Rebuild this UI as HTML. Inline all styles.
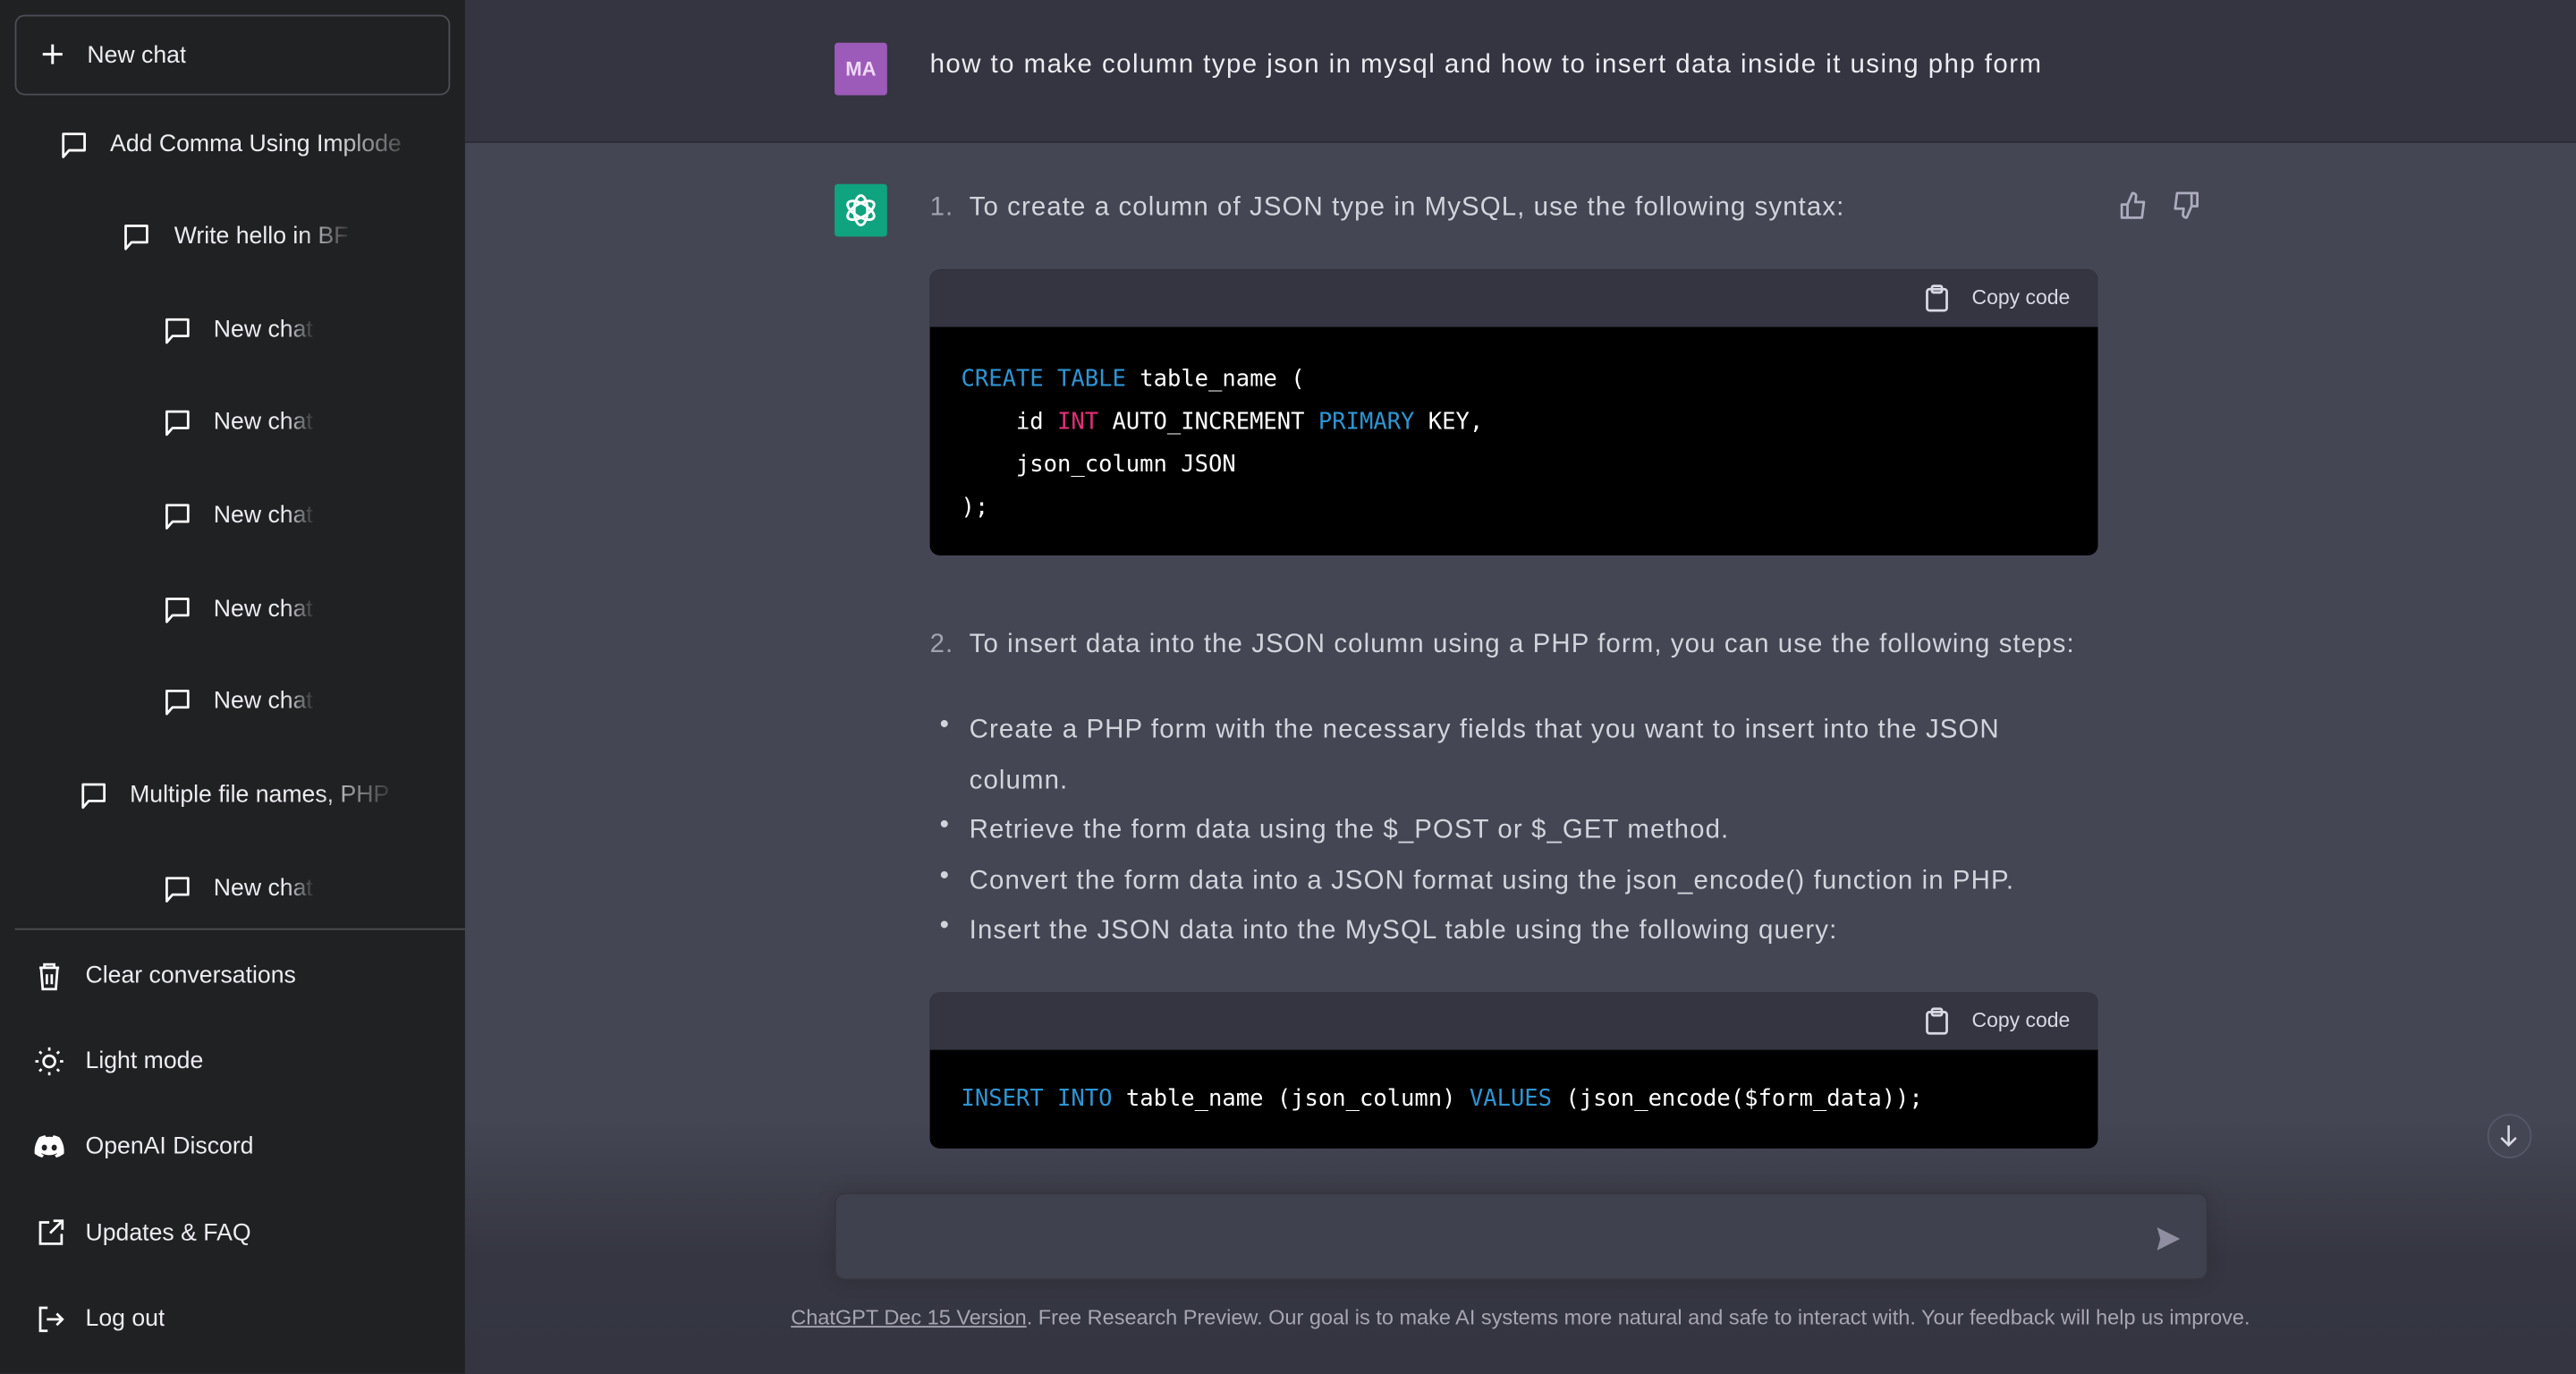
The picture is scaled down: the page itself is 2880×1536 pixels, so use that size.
<!DOCTYPE html>
<html><head><meta charset="utf-8">
<style>
html,body{margin:0;padding:0;width:2880px;height:1536px;overflow:hidden;background:#343541}
#w{position:absolute;left:0;top:0;width:1568px;height:836px;transform:scale(1.83673);transform-origin:0 0;font-family:"Liberation Sans",sans-serif;color:#ececf1;overflow:hidden}
.a{position:absolute;white-space:nowrap}
#side{position:absolute;left:0;top:0;width:283px;height:836px;background:#202123}
.si{position:absolute;font-size:14.5px;color:#ececf1;line-height:20px;overflow:hidden}
.fade{-webkit-mask-image:linear-gradient(to right,#000 70%,transparent);mask-image:linear-gradient(to right,#000 70%,transparent)}
svg{position:absolute;overflow:visible}
.main{position:absolute;left:283px;top:0;width:1285px;height:836px;background:#444654}
.txt{font-size:16px;letter-spacing:0.6px;color:#d1d5db;line-height:20px}
.code{position:absolute;left:566px;width:711px;border-radius:6px;overflow:hidden;background:#000}
.ch{height:35px;background:#343541;position:relative}
.cc{position:absolute;right:17px;top:10px;font-size:12.5px;color:#d9d9e3}
.mono{font-family:"DejaVu Sans Mono","Liberation Mono",monospace;font-size:13.9px;color:#fff}
.kw{color:#2e95d3}.red{color:#df3079}
</style></head><body><div id="w">
<div class="main"></div>
<div class="a" style="left:283px;top:0;width:1285px;height:86px;background:#343541;border-bottom:1px solid #2b2c35"></div>
<div class="a" style="left:283px;top:680px;width:1285px;height:156px;background:linear-gradient(#444654 0%,#353641 55%,#343541 100%)"></div>

<div id="side">
<div class="a" style="left:9px;top:9px;width:263px;height:47px;border:1px solid #4d4d55;border-radius:6px"></div>
<svg style="left:25px;top:26px" width="14" height="14" viewBox="0 0 14 14"><path d="M7 1v12M1 7h12" stroke="#fff" stroke-width="1.6"/></svg>
<div class="si" style="left:53px;top:24px">New chat</div>
</div>

<div id="items"></div>
<div class="a" style="left:9px;top:565px;width:274px;height:1px;background:#4d4d4f"></div>

<svg style="left:22px;top:585px" width="16" height="18" viewBox="0 0 16 18" fill="none" stroke="#fff" stroke-width="1.5"><path d="M2 4h12M5 4V2h6v2M3 4l1 13h8l1-13M6.5 8v6M9.5 8v6"/></svg>
<div class="si" style="left:52px;top:584px">Clear conversations</div>
<svg style="left:21px;top:637px" width="18" height="18" viewBox="0 0 18 18" fill="none" stroke="#fff" stroke-width="1.5"><circle cx="9" cy="9" r="3.5"/><path d="M9 0.5v2M9 15.5v2M0.5 9h2M15.5 9h2M3 3l1.3 1.3M13.7 13.7L15 15M3 15l1.3-1.3M13.7 4.3L15 3"/></svg>
<div class="si" style="left:52px;top:636px">Light mode</div>
<svg style="left:21px;top:691px" width="18" height="14" viewBox="0 0 18 14"><path d="M15.2 1.2A15 15 0 0 0 11.5 0l-.5 1a14 14 0 0 0-4 0L6.5 0A15 15 0 0 0 2.8 1.2C.5 4.6-.2 8 .1 11.3A15 15 0 0 0 4.7 13.6l1-1.5-1.6-.8.4-.3a10.6 10.6 0 0 0 9 0l.4.3-1.6.8 1 1.5a15 15 0 0 0 4.6-2.3c.4-3.8-.6-7.2-2.7-10.1zM6 9.3c-.9 0-1.6-.8-1.6-1.8S5.1 5.7 6 5.7s1.7.8 1.6 1.8c0 1-.7 1.8-1.6 1.8zm6 0c-.9 0-1.6-.8-1.6-1.8s.7-1.8 1.6-1.8 1.7.8 1.6 1.8c0 1-.7 1.8-1.6 1.8z" fill="#fff"/></svg>
<div class="si" style="left:52px;top:688px">OpenAI Discord</div>
<svg style="left:23px;top:742px" width="16" height="16" viewBox="0 0 16 16" fill="none" stroke="#fff" stroke-width="1.5"><path d="M7 2H1.5v13h13V9M9.5 1h5.5v5.5M15 1L7.5 8.5"/></svg>
<div class="si" style="left:52px;top:741px">Updates &amp; FAQ</div>
<svg style="left:23px;top:795px" width="16" height="16" viewBox="0 0 16 16" fill="none" stroke="#fff" stroke-width="1.5"><path d="M6 1H1.5v14H6M5.5 8H15M11.5 4.5L15 8l-3.5 3.5"/></svg>
<div class="si" style="left:52px;top:793px">Log out</div>

<div class="a" style="left:508px;top:26px;width:32px;height:32px;background:#9c5bb8;border-radius:2px;font-size:12px;font-weight:bold;color:#eed8f5;text-align:center;line-height:32px">MA</div>
<div class="a txt" style="left:566px;top:30px;color:#ececf1;letter-spacing:0.8px">how to make column type json in mysql and how to insert data inside it using php form</div>

<div class="a" style="left:508px;top:112px;width:32px;height:32px;background:#10a37f;border-radius:2px"></div>
<svg style="left:512px;top:116px" width="24" height="24" viewBox="0 0 24 24" fill="none" stroke="#fff" stroke-width="1.6">
<g transform="translate(12 12)"><ellipse rx="9" ry="4" transform="rotate(30)"/><ellipse rx="9" ry="4" transform="rotate(90)"/><ellipse rx="9" ry="4" transform="rotate(150)"/></g></svg>
<svg style="left:1290px;top:116px" width="18" height="18" viewBox="0 0 18 18" fill="none" stroke="#acacbe" stroke-width="1.5" stroke-linejoin="round"><path d="M1.5 8.5h3.5v8H1.5zM5 8.5l3-7c1.5 0 2.5 1 2.2 2.5L9.8 7h5.2l-1.2 9.5H5"/></svg>
<svg style="left:1321px;top:116px" width="18" height="18" viewBox="0 0 18 18" fill="none" stroke="#acacbe" stroke-width="1.5" stroke-linejoin="round"><path d="M13 1.5h3.5v8H13zM13 9.5l-3 7c-1.5 0-2.5-1-2.2-2.5l.4-3H3l1.2-9.5H13"/></svg>

<div class="a txt" style="left:566px;top:117px;color:#a0a3ad">1.</div>
<div class="a txt" style="left:590px;top:117px">To create a column of JSON type in MySQL, use the following syntax:</div>

<div class="code" style="top:164px;height:174px">
<div class="ch"><svg style="left:606px;top:9px" width="14" height="17" viewBox="0 0 14 17" fill="none" stroke="#d9d9e3" stroke-width="1.5"><rect x="1" y="3" width="12" height="13" rx="1.5"/><rect x="4" y="1" width="6" height="4" rx="1"/></svg><div class="cc">Copy code</div></div>
<div class="a mono" style="left:19px;top:54px;line-height:26px"><span class="kw">CREATE</span> <span class="kw">TABLE</span> table_name (<br>&nbsp;&nbsp;&nbsp;&nbsp;id <span class="red">INT</span> AUTO_INCREMENT <span class="kw">PRIMARY</span> KEY,<br>&nbsp;&nbsp;&nbsp;&nbsp;json_column JSON<br>);</div>
</div>

<div class="a txt" style="left:566px;top:383px;color:#a0a3ad">2.</div>
<div class="a txt" style="left:590px;top:383px">To insert data into the JSON column using a PHP form, you can use the following steps:</div>
<div class="a txt" style="left:572px;top:432px">•</div><div class="a txt" style="left:590px;top:435px">Create a PHP form with the necessary fields that you want to insert into the JSON</div>
<div class="a txt" style="left:590px;top:466px">column.</div>
<div class="a txt" style="left:572px;top:493px">•</div><div class="a txt" style="left:590px;top:496px">Retrieve the form data using the $_POST or $_GET method.</div>
<div class="a txt" style="left:572px;top:524px">•</div><div class="a txt" style="left:590px;top:527px">Convert the form data into a JSON format using the json_encode() function in PHP.</div>
<div class="a txt" style="left:572px;top:554px">•</div><div class="a txt" style="left:590px;top:557px">Insert the JSON data into the MySQL table using the following query:</div>

<div class="code" style="top:604px;height:95px">
<div class="ch"><svg style="left:606px;top:9px" width="14" height="17" viewBox="0 0 14 17" fill="none" stroke="#d9d9e3" stroke-width="1.5"><rect x="1" y="3" width="12" height="13" rx="1.5"/><rect x="4" y="1" width="6" height="4" rx="1"/></svg><div class="cc">Copy code</div></div>
<div class="a mono" style="left:19px;top:52px;line-height:26px"><span class="kw">INSERT</span> <span class="kw">INTO</span> table_name (json_column) <span class="kw">VALUES</span> (json_encode($form_data));</div>
</div>

<div class="a" style="left:1514px;top:678px;width:25px;height:25px;border:1px solid #565869;border-radius:50%;background:#444654"></div>
<svg style="left:1521px;top:684px" width="12" height="14" viewBox="0 0 12 14" fill="none" stroke="#d9d9e3" stroke-width="1.4"><path d="M6 1v12M1.5 8.5L6 13l4.5-4.5"/></svg>

<div class="a" style="left:508px;top:726px;width:834px;height:51px;background:#40414f;border-radius:6px;border:1px solid #35363f;box-shadow:0 0 12px rgba(0,0,0,.15)"></div>
<svg style="left:1312px;top:746px" width="16" height="16" viewBox="0 0 16 16"><path d="M1 1l14 7-14 7 2-7z" fill="#8e8ea0"/></svg>

<div class="a" style="left:0;width:1568px;top:794px;padding-left:283px;box-sizing:border-box;text-align:center;font-size:12.8px;color:#a6a6b3"><span style="text-decoration:underline">ChatGPT Dec 15 Version</span>. Free Research Preview. Our goal is to make AI systems more natural and safe to interact with. Your feedback will help us improve.</div>

<script>
var it=[[45,67,88,"Add Comma Using Implode",190],[83,106,144,"Write hello in BF",110],[108,130,201,"New chat",62],[108,130,257,"New chat",62],[108,130,314,"New chat",62],[108,130,371,"New chat",62],[108,130,427,"New chat",62],[57,79,484,"Multiple file names, PHP",164],[108,130,541,"New chat",62]];
var h="";it.forEach(function(a){h+='<svg style="left:'+(a[0]-8)+'px;top:'+(a[2]-8)+'px" width="16" height="17" viewBox="0 0 16 17" fill="none" stroke="#fff" stroke-width="1.5" stroke-linejoin="round"><path d="M1.5 1.5h13v10H5l-3.5 4z"/></svg><div class="si fade" style="left:'+a[1]+'px;top:'+(a[2]-10)+'px;width:'+a[4]+'px">'+a[3]+'</div>';});
document.getElementById("items").innerHTML=h;
</script>
</div></body></html>
